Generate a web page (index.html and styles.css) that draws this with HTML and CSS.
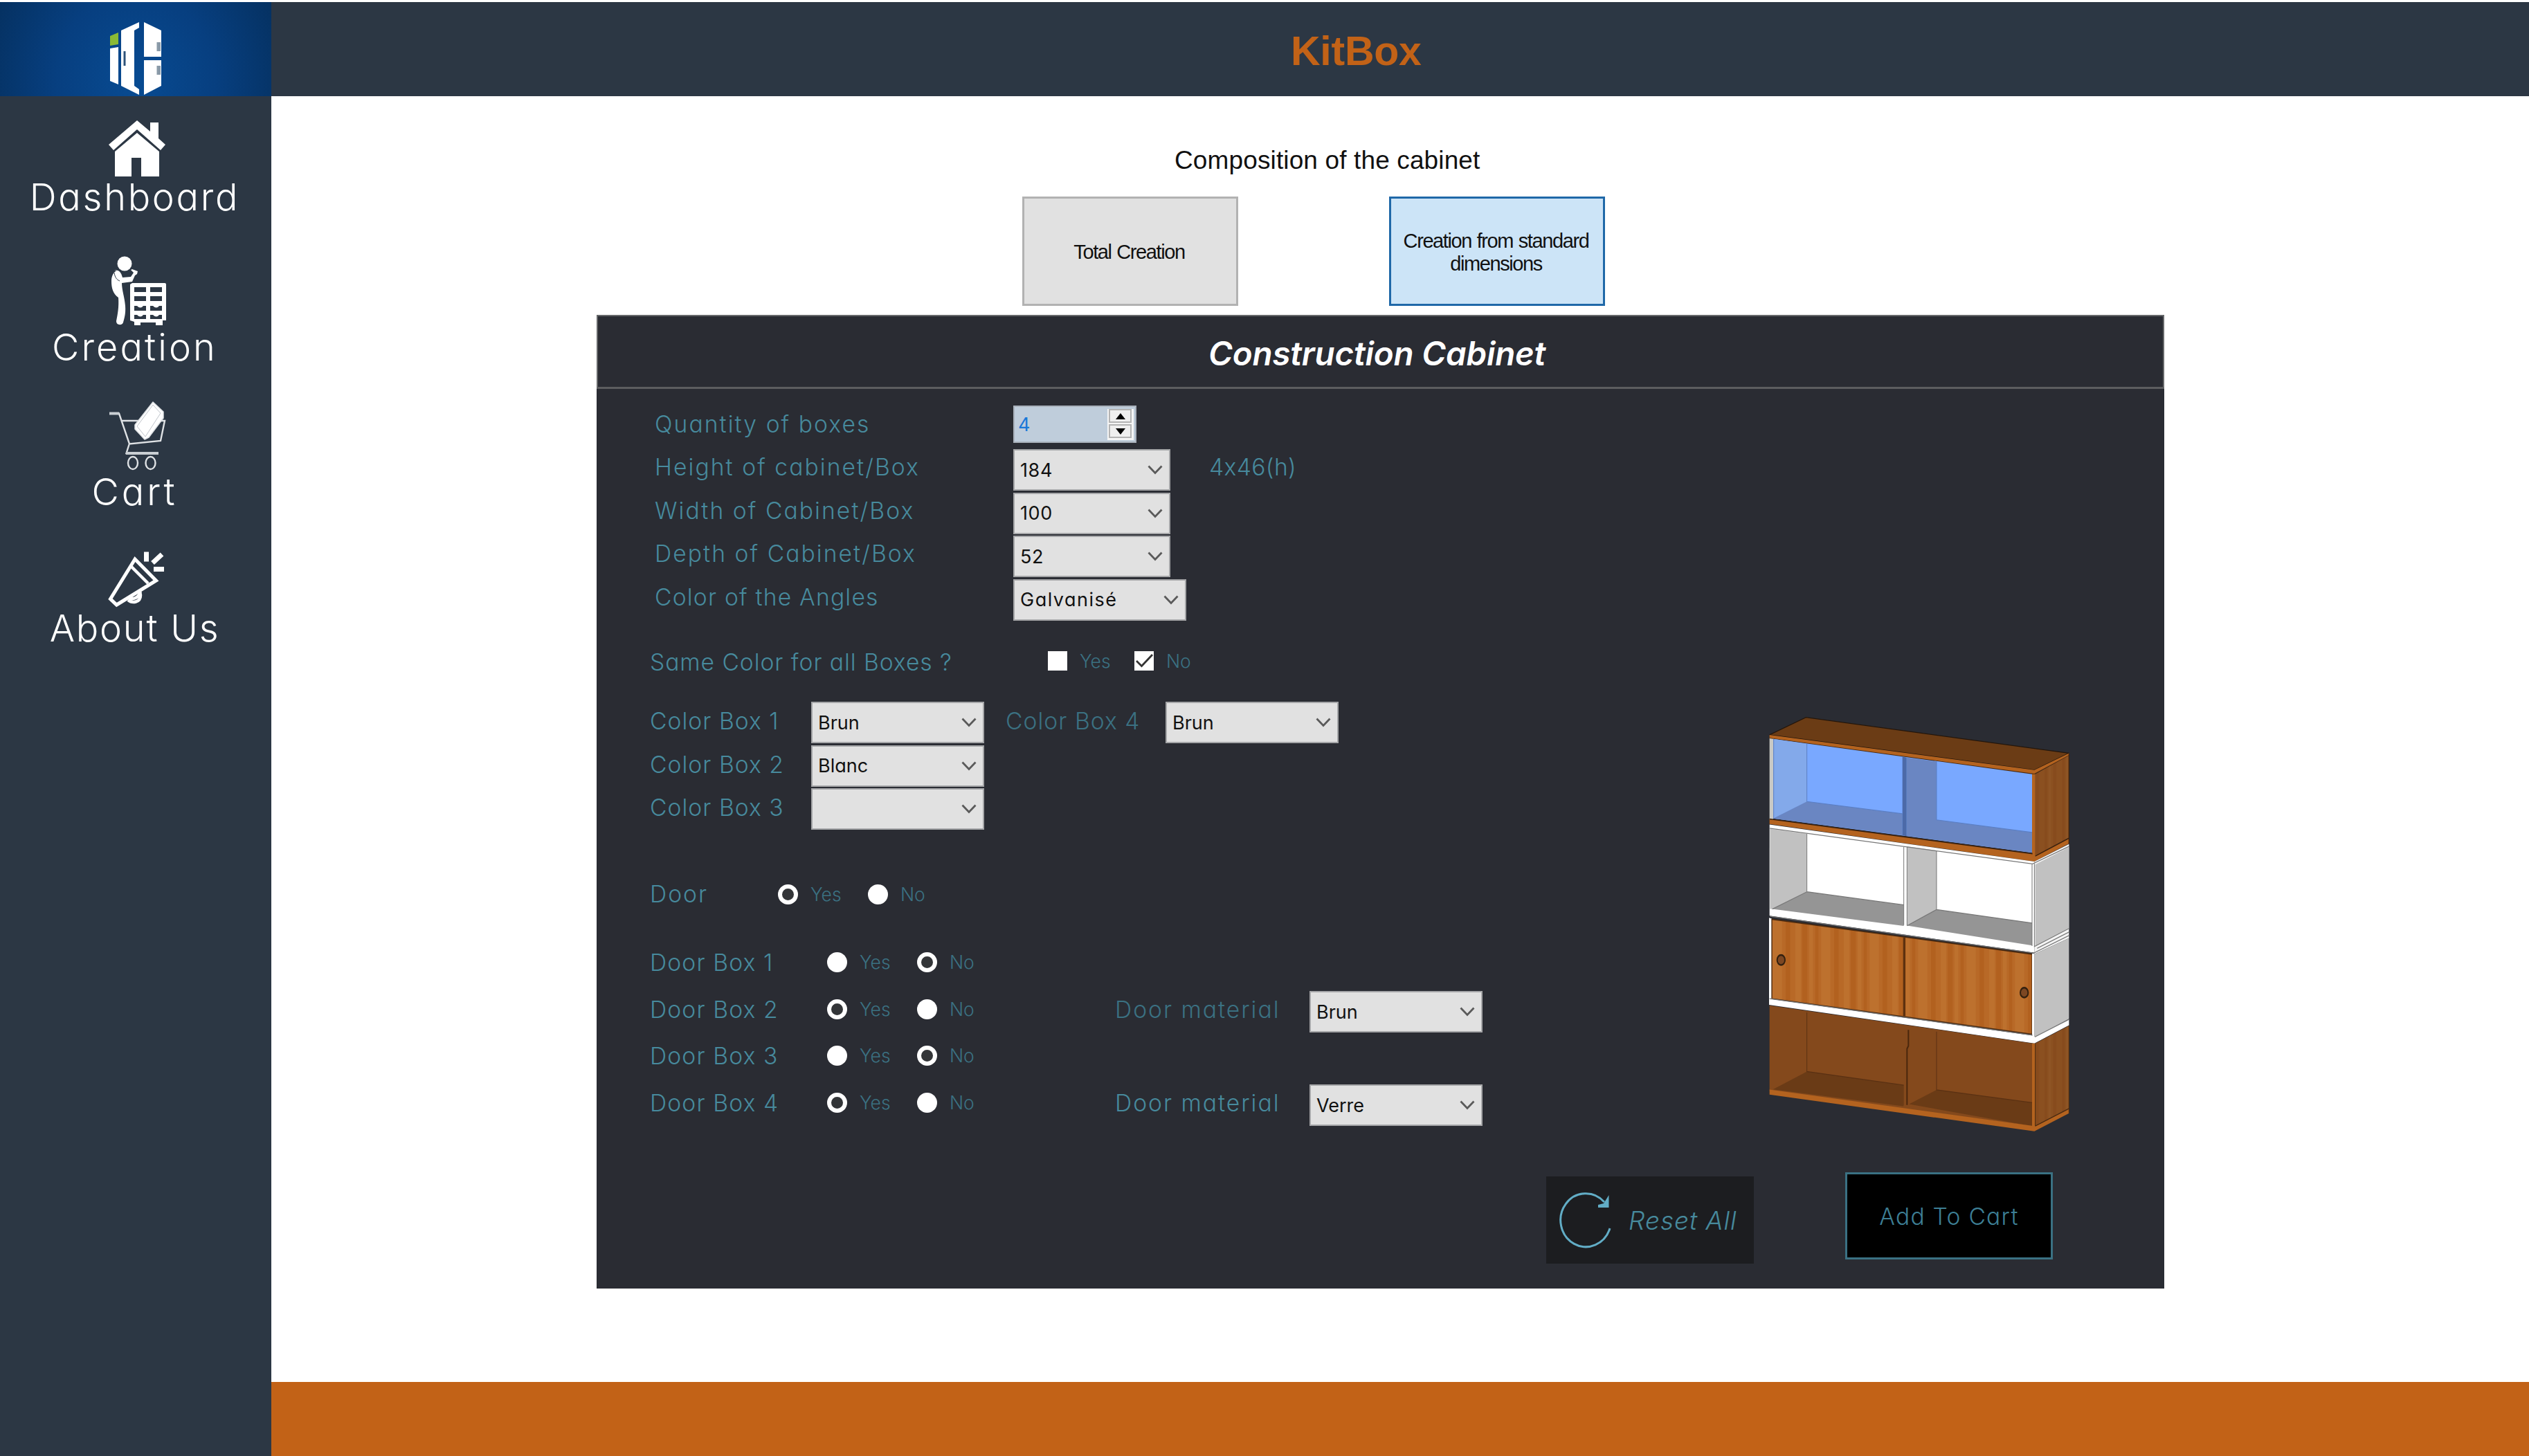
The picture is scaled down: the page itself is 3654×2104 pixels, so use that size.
FILE: index.html
```
<!DOCTYPE html>
<html lang="en">
<head>
<meta charset="utf-8">
<title>KitBox</title>
<link rel="stylesheet" href="styles.css">
</head>
<body>
<svg width="0" height="0" class="defs" aria-hidden="true">
  <symbol id="chevron" viewBox="0 0 22 14"><path d="M1.5 1.5 11 11.5 20.5 1.5" fill="none" stroke="#5a5a5a" stroke-width="2.8"/></symbol>
</svg>
<aside class="sidebar">
  <div class="logo">
    <svg width="76" height="106" viewBox="158 32 76 106">
      <path fill="#8aba35" d="M159 52 171 47V64L159 66Z"/>
      <path fill="#fff" d="M159 70 171 68V122L159 117ZM175 44 201 32V40L194 44V124L201 129V137L175 124Z"/>
      <path fill="#fff" d="M208 32 233 44V82H208ZM208 87H233V124L208 137Z"/>
      <path fill="#2d5279" d="M178.500 74h3v21h-3z"/>
      <path fill="#8a9aa8" d="M226.500 61h5.500v13h-5.500zM226.500 95h5.500v13h-5.500z"/>
    </svg>
  </div>
  <nav class="menu">
    <a class="item dashboard"><svg width="84" height="83" viewBox="156 173 84 83"><path fill="#fff" d="M198 174 217 190V177H229V200L239 209 232 217 198 187 164 217 157 209ZM198 192 230 219V255H204V228H190V255H166V219Z"/></svg><span>Dashboard</span></a>
    <a class="item creation"><svg width="86" height="102" viewBox="152 369 86 102"><circle cx="177" cy="381" r="10.500" fill="#fff"/><path fill="#fff" d="M162 391c6-2 10 2 12 10l12-1 4-6-4-4 2-1 8 3-1 4-3 2-4 9-15 2c0 10 4 20 5 33 1 12-2 20-3 24-2 5-10 4-10-2 2-10 4-20 3-34-8-6-10-14-10-24 0-8 4-14 8-15Z"/><path d="M162 394c1 6 3 10 8 12" fill="none" stroke="#2c3744" stroke-width="1"/><path fill="#fff" fill-rule="evenodd" d="M188 409H235a2 2 0 0 1 2 2V463H232V470H222V466H200V470H191V465L185 463V411ZM191 415V422H208V415ZM214 415V422H231V415ZM191 428V435H208V428ZM214 428V435H231V428ZM191 442V449H208V442H204q-4 5-9 0ZM214 442V449H231V442H227q-4 5-9 0ZM191 455V461H208V455H204q-4 5-9 0ZM214 455V461H231V455H227q-4 5-9 0Z"/></svg><span>Creation</span></a>
    <a class="item cart"><svg width="84" height="102" viewBox="156 579 84 102"><g fill="none" stroke="#dfe2e5" stroke-width="2.400"><path d="M158 597.500H172L187 641.500 232 637 238 608H176M187 641 182.500 655H229" /><ellipse cx="192" cy="669" rx="7" ry="9"/><ellipse cx="217.500" cy="669" rx="7" ry="9"/></g><path d="M158 597.500H172M182 655H229" stroke="#c9ced3" stroke-width="4"/><path fill="#fff" stroke="#dfe2e5" stroke-width="1.500" stroke-linejoin="round" d="M221 581 236 595V604L215 632 209 635 195 620V614Z"/><path d="M221 585 232 597 210 631 198 616Z" fill="none" stroke="#aeb5bc" stroke-width=".8"/></svg><span>Cart</span></a>
    <a class="item about"><svg width="84" height="84" viewBox="156 795 84 84"><g fill="none" stroke="#fff"><path stroke-width="5" d="M195 808 159.500 865.500 168.500 874 225.500 839Z"/><path stroke-width="4.500" d="M190 819 214 843M185 867c6 5 18 4 18-7l-1-5M186 863c5 4 14 2 17-8"/><path stroke-width="7" d="M211.500 797.500v14M234 801 220.500 813.500M222 822.500H237"/></g></svg><span>About Us</span></a>
  </nav>
</aside>
<div class="page">
  <header class="topbar"><h1>KitBox</h1></header>
  <main class="content">
    <h2 class="caption">Composition of the cabinet</h2>
    <div class="modes">
      <button class="mode"><span>Total Creation</span></button>
      <button class="mode active"><span>Creation from standard</span><span>dimensions</span></button>
    </div>
    <section class="panel">
      <h3 class="panel-title">Construction Cabinet</h3>
      <div class="panel-body">
        <form class="form">
          <div class="row dims qty"><label>Quantity of boxes</label>
            <div class="number"><span>4</span><div class="spin"><i><svg width="14" height="9" viewBox="0 0 14 9"><path d="M7 0 14 9H0Z"/></svg></i><i><svg width="14" height="9" viewBox="0 0 14 9"><path d="M0 0H14L7 9Z"/></svg></i></div></div></div>
          <div class="row dims"><label>Height of cabinet/Box</label><div class="select narrow"><span>184</span><svg width="22" height="14"><use href="#chevron"/></svg></div><label class="note">4x46(h)</label></div>
          <div class="row dims"><label>Width of Cabinet/Box</label><div class="select narrow"><span>100</span><svg width="22" height="14"><use href="#chevron"/></svg></div></div>
          <div class="row dims"><label>Depth of Cabinet/Box</label><div class="select narrow"><span>52</span><svg width="22" height="14"><use href="#chevron"/></svg></div></div>
          <div class="row dims angles"><label>Color of the Angles</label><div class="select"><span>Galvanisé</span><svg width="22" height="14"><use href="#chevron"/></svg></div></div>
          <div class="row same"><label>Same Color for all Boxes ?</label>
            <div class="opt"><b class="check"></b><span>Yes</span></div>
            <div class="opt"><b class="check"><svg width="28" height="28" viewBox="0 0 28 28"><path d="M3 14 10.500 21.500 26 5" fill="none" stroke="#333" stroke-width="2.800"/></svg></b><span>No</span></div></div>
          <div class="row colors"><label>Color Box 1</label><div class="select"><span>Brun</span><svg width="22" height="14"><use href="#chevron"/></svg></div><label class="dim">Color Box 4</label><div class="select"><span>Brun</span><svg width="22" height="14"><use href="#chevron"/></svg></div></div>
          <div class="row colors"><label>Color Box 2</label><div class="select"><span>Blanc</span><svg width="22" height="14"><use href="#chevron"/></svg></div></div>
          <div class="row colors"><label>Color Box 3</label><div class="select"><span></span><svg width="22" height="14"><use href="#chevron"/></svg></div></div>
          <div class="row door"><label>Door</label><div class="opt"><b class="radio on"></b><span>Yes</span></div><div class="opt"><b class="radio"></b><span>No</span></div></div>
          <div class="row doors"><label>Door Box 1</label><div class="opt"><b class="radio"></b><span>Yes</span></div><div class="opt"><b class="radio on"></b><span>No</span></div></div>
          <div class="row doors"><label>Door Box 2</label><div class="opt"><b class="radio on"></b><span>Yes</span></div><div class="opt"><b class="radio"></b><span>No</span></div><label class="material dim">Door material</label><div class="select"><span>Brun</span><svg width="22" height="14"><use href="#chevron"/></svg></div></div>
          <div class="row doors"><label>Door Box 3</label><div class="opt"><b class="radio"></b><span>Yes</span></div><div class="opt"><b class="radio on"></b><span>No</span></div></div>
          <div class="row doors"><label>Door Box 4</label><div class="opt"><b class="radio on"></b><span>Yes</span></div><div class="opt"><b class="radio"></b><span>No</span></div><label class="material">Door material</label><div class="select"><span>Verre</span><svg width="22" height="14"><use href="#chevron"/></svg></div></div>
        </form>
        <div class="side">
          <svg class="cabinet" width="500" height="660" viewBox="0 0 1500 1568" preserveAspectRatio="none">
            <defs>
              <pattern id="grain" width="210" height="400" patternUnits="userSpaceOnUse"><rect width="210" height="400" fill="#b86927"/><path fill="#bd712e" d="M12 0h24v400H12zM72 0h16v400H72zM124 0h40v400h-40z"/><path fill="#b2611f" d="M42 0h22v400H42zM98 0h14v400h-14zM180 0h20v400h-20z"/></pattern>
              <pattern id="sideGrain" width="76" height="400" patternUnits="userSpaceOnUse"><rect width="76" height="400" fill="#8b5020"/><path fill="#874b1d" d="M10 0h12v400H10zM48 0h14v400H48z"/><path fill="#8f5525" d="M28 0h10v400H28z"/></pattern>
            </defs>
            <path fill="#6b3c15" stroke="#24160b" stroke-width="3" d="M110 147 268 87 1408 210 1258 268Z"/>
            <path fill="#b4631f" d="M110 147 1258 268V282L110 159ZM1258 268 1408 210V218L1258 282Z"/>
            <path fill="none" stroke="#4a2a10" stroke-width="3" d="M110 159 1258 282 1408 218"/>
            <path fill="#c9c9c5" d="M110 159 126 161V438H110Z"/>
            <path fill="#79a8ff" d="M126 161 1248 282V552L126 434Z"/>
            <path fill="#83a9ea" d="M126 161 272 178V376L126 434Z"/>
            <path fill="#6a86c2" d="M126 434 272 376 686 418V492ZM704 225 834 239V439L704 494ZM704 494 834 439 1248 482V552Z"/>
            <path fill="#4c6aa8" d="M686 222 704 225V495L686 492Z"/>
            <path fill="none" stroke="#5b7fc4" stroke-width="3" d="M272 178V376L686 418M834 239V439L1248 482M128 162V434"/>
            <path fill="url(#sideGrain)" d="M1262 282 1408 218V500L1262 562Z"/>
            <path fill="#b4631f" d="M1248 282H1262V565H1248ZM110 436 1258 556V582L110 453ZM1258 562 1408 502V520L1258 582Z"/>
            <path fill="none" stroke="#3c220e" stroke-width="4" d="M110 436 1250 555M1262 563 1408 502M1408 212V520"/>
            <path fill="#fff" d="M110 455 1258 582V895L110 768Z"/>
            <path fill="#f4f4f4" d="M1258 582 1408 522V845L1258 900Z"/>
            <path fill="#c1c1c1" d="M112 470 272 487V686L122 745H112ZM706 530 834 544V747L706 800ZM1262 592 1408 533V812L1262 872Z"/>
            <path fill="#959595" d="M122 745 272 686 692 731V803ZM706 802 834 747 1248 793V870Z"/>
            <path fill="none" stroke="#777" stroke-width="3" d="M110 468 1250 590 1408 530M272 487V686L692 731M834 544V747L1248 793M272 686 122 745M834 747 706 802M692 530V800M706 532V802M1248 590V872M1258 590V874L1408 812M112 770 1256 896 1408 836M1270 880 1408 824"/>
            <path fill="#fff" d="M108 775 120 778V1055H108Z"/>
            <path fill="url(#grain)" stroke="#4a2a10" stroke-width="4" d="M120 780 1248 900V1175L120 1053Z"/>
            <path stroke="#5d310f" stroke-width="10" d="M694 842V1113"/>
            <circle cx="160" cy="920" r="17" fill="#7d4722" stroke="#33200f" stroke-width="6"/><circle cx="1214" cy="1032" r="17" fill="#7d4722" stroke="#33200f" stroke-width="6"/>
            <path fill="#c1c1c1" d="M1258 900 1408 845V1122L1258 1186Z"/>
            <path fill="#fff" d="M1248 898H1258V1180H1248ZM108 1053 1258 1180V1206L108 1074ZM1258 1184 1408 1124V1144L1258 1206Z"/>
            <path fill="none" stroke="#777" stroke-width="3" d="M1260 1184 1408 1124M110 1053 1250 1178"/>
            <path fill="#84491c" d="M110 1076 1250 1206V1490L110 1368Z"/>
            <path fill="#6a3b16" d="M125 1364 272 1303 692 1350V1418L690 1422ZM715 1415 834 1366 1248 1410V1490Z"/>
            <path fill="none" stroke="#5a3113" stroke-width="3" d="M272 1100V1303L692 1350M834 1166V1366L1248 1410"/>
            <path stroke="#4a270d" stroke-width="6" d="M712 1160V1215L706 1225V1418" fill="none"/>
            <path fill="url(#sideGrain)" d="M1262 1206 1408 1146V1432L1262 1490Z"/>
            <path fill="#b4631f" d="M1248 1206H1262V1495H1248ZM110 1365 1258 1490V1508L110 1382ZM1258 1492 1408 1432V1446L1258 1508Z"/>
            <path fill="none" stroke="#4a2a10" stroke-width="3" d="M1262 1490 1408 1430M1408 1146V1446M1262 1208V1490"/>
          </svg>
          <div class="actions">
            <button type="button" class="reset"><svg width="76" height="82" viewBox="2252 1722 76 82"><path d="M2318 1737A36.500 38.500 0 1 0 2326 1775" fill="none" stroke="#62adc6" stroke-width="3"/><path fill="#62adc6" d="M2324.500 1727V1745H2309V1741L2317 1739Z"/></svg><span>Reset All</span></button>
            <button type="button" class="add"><span>Add To Cart</span></button>
          </div>
        </div>
      </div>
    </section>
  </main>
  <footer class="bottombar"></footer>
</div>
</body>
</html>
```
FILE: styles.css
```
* { box-sizing: border-box; }
body { margin: 0; width: 3654px; height: 2104px; padding-top: 3px; display: flex; background: #fff; overflow: hidden; font-family: Inter, "Open Sans", sans-serif; font-weight: 300; font-feature-settings: "cv11", "calt" 0; }
h1, h2, h3, label, button { margin: 0; padding: 0; font-weight: inherit; }
button { border: 0; font: inherit; font-feature-settings: inherit; }
svg { display: block; flex: none; }
.defs { position: absolute; }

.sidebar { width: 392px; background: #2c3744; display: flex; flex-direction: column; }
.logo { height: 136px; padding: 29px 0 0 158px; background: radial-gradient(ellipse 230px 260px at 50% 85%, #084b92 0%, #073f80 50%, #05305f 100%); }
.menu { display: flex; flex-direction: column; padding-top: 34px; }
.item { display: flex; flex-direction: column; align-items: center; padding-right: 3px; color: #fff; font-size: 54px; line-height: 60px; white-space: nowrap; }
.item svg { margin-left: 7px; }
.dashboard { letter-spacing: 2.7px; margin-bottom: 53px; }
.dashboard svg { margin-bottom: -1px; }
.dashboard span { margin-bottom: 1px; }
.creation { letter-spacing: 3.1px; margin-bottom: 47px; }
.creation svg { margin-bottom: 1px; }
.cart { letter-spacing: 4px; margin-bottom: 54px; }
.about { letter-spacing: 1.75px; }
.about svg { margin-bottom: -1px; }

.page { flex: 1; display: flex; flex-direction: column; }
.topbar { height: 136px; background: #2c3744; padding-left: 1473px; }
.topbar h1 { font: bold 59px/143px "Liberation Sans", Arial, sans-serif; letter-spacing: -0.25px; color: #c26217; }
.bottombar { height: 107px; background: #c26217; }
.content { flex: 1; padding-left: 470px; }
.caption { font: 37px/42px "Liberation Sans", Arial, sans-serif; letter-spacing: 0.13px; padding: 72px 0 0 835px; height: 145px; color: #111; }
.modes { display: flex; gap: 218px; padding-left: 615px; height: 171px; }
.mode { width: 312px; height: 158px; padding: 3px 3px 0 0; display: flex; flex-direction: column; align-items: center; justify-content: center; background: #e1e1e1; border: 3px solid #b2b2b2; font: 29px/33px "Liberation Sans", Arial, sans-serif; letter-spacing: -1.4px; word-spacing: 1px; color: #111; white-space: nowrap; }
.mode.active { background: #cce4f7; border-color: #1f68a8; }

.panel { width: 2265px; height: 1407px; background: #2a2c33; }
.panel-title { height: 107px; border: 2px solid #66686a; border-bottom: 3px solid #5c5d5f; font-weight: 600; font-style: italic; font-size: 47.5px; letter-spacing: -0.2px; line-height: 107px; color: #fff; padding-left: 882px; }
.panel-body { display: flex; height: 1300px; }
.form { width: 1372px; padding: 20px 0 0 77px; color: #478a9d; font-size: 33.6px; }
.row { display: grid; align-items: center; height: 62.5px; white-space: nowrap; }
.dims { grid-template-columns: 518px 283px auto; padding-left: 7px; }
.dims.qty { margin-bottom: 3.5px; }
.dims label { padding-bottom: 9px; letter-spacing: 2.08px; }
.dims.qty label { padding-bottom: 1px; }
.dims.angles label { letter-spacing: 1.22px; }
.dims .note { letter-spacing: 0.4px; }
.colors label { padding-bottom: 5px; letter-spacing: 1.05px; }
.same { grid-template-columns: 575px 125px auto; height: 40px; margin: 35px 0 40px; }
.same label { padding-top: 3px; letter-spacing: 0.96px; }
.colors { grid-template-columns: 233px 281px 231px auto; }
.door { grid-template-columns: 185px 130px auto; height: 40px; margin: 70px 0 46px; }
.door label { padding-bottom: 2px; letter-spacing: 2px; }
.doors { grid-template-columns: 256px 130px 286px 281px auto; height: 67.5px; }
.doors label { letter-spacing: 1.15px; }
.doors .material { letter-spacing: 2px; }
.doors .select { margin-top: 8px; }
.dim { color: #3b7182; }
.select { display: flex; align-items: center; justify-content: space-between; width: 250px; height: 60px; padding: 0 9px 0 8px; background: #e1e1e1; border: 2px solid #a5a6a8; color: #111; font-size: 27px; font-weight: 400; }
.angles .select { letter-spacing: 1.5px; }
.select.narrow { width: 227px; letter-spacing: 0.6px; }
.number { display: flex; justify-content: space-between; width: 178px; height: 54px; border: 2px solid #a9b1bb; background: #bfcddb; color: #1a78d8; font-size: 27px; font-weight: 400; line-height: 50px; padding: 3px 2px 0 5px; }
.number span { margin-top: -2px; }
.spin { width: 38px; height: 45px; background: #f5f5f5; padding: 0 3px 0 2px; display: flex; flex-direction: column; gap: 2px; }
.spin i { height: 20px; border: 2px solid #b4b4b4; background: #efefef; display: flex; align-items: center; justify-content: center; }
.opt { display: flex; align-items: center; gap: 18px; color: #3b7182; font-size: 26.5px; }
.check { width: 28px; height: 28px; background: #fff; }
.radio { width: 29px; height: 29px; border-radius: 50%; background: #fff; }
.radio.on { background: #333538; border: 6px solid #fff; }

.side { flex: 1; display: flex; flex-direction: column; }
.cabinet { margin: 438px 0 0 286px; }
.actions { display: flex; gap: 132px; padding-top: 34px; }
.reset, .add { width: 300px; height: 126px; display: flex; align-items: center; }
.reset { margin-top: 6px; background: #1c1d20; color: #478a9d; font-style: italic; font-size: 37px; letter-spacing: 1px; padding-left: 18px; gap: 25px; }
.add { background: #000; border: 3px solid #3a7183; color: #3d7f95; font-size: 33.6px; letter-spacing: 1.25px; justify-content: center; }
```
